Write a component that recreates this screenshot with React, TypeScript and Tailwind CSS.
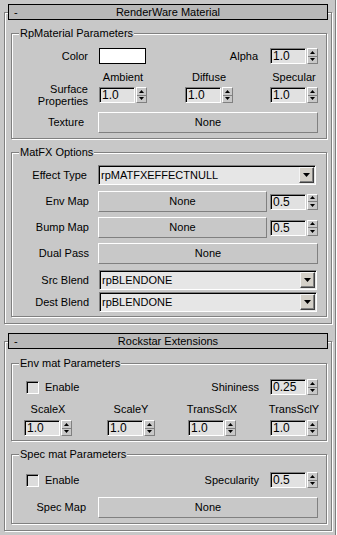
import React from 'react';

const bevelOut = 'border border-t-white border-l-white border-b-[#808080] border-r-[#808080]';
const bevelIn = 'border border-t-[#808080] border-l-[#808080] border-b-white border-r-white shadow-[inset_1px_1px_0_#000]';
const etched = 'border border-[#808080] shadow-[inset_1px_1px_0_#fff,1px_1px_0_#fff]';

const Tri = ({ down = false, big = false }: { down?: boolean; big?: boolean }) => {
  const w = big ? 7 : 5;
  const h = big ? 4 : 3;
  return (
    <svg width={w} height={h} viewBox={`0 0 ${w} ${h}`} className="block">
      {down ? <polygon points={`0,0 ${w},0 ${w / 2},${h}`} fill="#000" /> : <polygon points={`0,${h} ${w},${h} ${w / 2},0`} fill="#000" />}
    </svg>
  );
};

const Spinner = ({ value, className = '' }: { value: string; className?: string }) => (
  <div className={`flex h-[16px] w-[48px] shrink-0 ${className}`}>
    <div className={`w-[36px] h-full bg-[#e1e1e1] ${bevelIn} pl-[2px] text-[12px] leading-[14px]`}>{value}</div>
    <div className={`ml-[1px] w-[11px] h-full flex flex-col ${bevelOut}`}>
      <div className="flex-1 flex items-center justify-center border-b border-b-[#808080]">
        <Tri />
      </div>
      <div className="flex-1 flex items-center justify-center">
        <Tri down />
      </div>
    </div>
  </div>
);

const Btn = ({ className = '', label = 'None' }: { className?: string; label?: string }) => (
  <div className={`h-[21px] flex items-center justify-center shrink-0 ${bevelOut} ${className}`}>{label}</div>
);

const Dropdown = ({ text }: { text: string }) => (
  <div className={`h-[20px] w-[218px] ml-[10px] shrink-0 flex items-center bg-[#e6e6e6] ${bevelIn} pl-[2px] pr-[1px]`}>
    <span className="flex-1 whitespace-nowrap">{text}</span>
    <div className="w-[15px] h-[16px] flex items-center justify-center bg-[#d4d0c8] border border-t-[#f4f4f4] border-l-[#f4f4f4] border-b-[#404040] border-r-[#404040] shadow-[inset_-1px_-1px_0_#808080]">
      <Tri down big />
    </div>
  </div>
);

const Lbl = ({ className = '', children }: { className?: string; children: React.ReactNode }) => (
  <div className={`shrink-0 text-right whitespace-nowrap ${className}`}>{children}</div>
);

const Check = () => <div className={`w-[13px] h-[13px] ml-[14px] shrink-0 bg-[#dcdcdc] ${bevelIn}`} />;

const Group = ({ title, className = '', children }: { title: string; className?: string; children: React.ReactNode }) => (
  <div className={`relative ml-[6px] w-[316px] ${etched} ${className}`}>
    <span className="absolute left-[7px] -top-[8px] bg-[#c8c8c8] px-[1px] leading-[14px] whitespace-nowrap">{title}</span>
    {children}
  </div>
);

const Rollout = ({ title, className = '', children }: { title: string; className?: string; children: React.ReactNode }) => (
  <div className={`ml-[4px] w-[328px] pb-[6px] ${etched} ${className}`}>
    <div className="relative -mt-[9px] ml-[3px] w-[320px] h-[16px] bg-[#b8b8b8] border border-black grid grid-cols-[1fr_auto_1fr] items-center leading-[14px]">
      <span className="pl-[5px]">-</span>
      <span className="whitespace-nowrap">{title}</span>
      <span />
    </div>
    {children}
  </div>
);

export default function App() {
  return (
    <div className="flow-root w-[337px] h-[535px] overflow-hidden bg-[#c8c8c8] font-['Liberation_Sans',Arial,sans-serif] text-[11px] leading-[13px] text-black shadow-[inset_-1px_0_0_#fff,inset_-2px_0_0_#808080]">
      <Rollout title="RenderWare Material" className="mt-[12px]">
        <Group title="RpMaterial Parameters" className="mt-[13px] pb-[5px]">
          <div className="mt-[14px] h-[16px] flex items-center">
            <Lbl className="w-[76px]">Color</Lbl>
            <div className="ml-[11px] w-[47px] h-[16px] bg-white border border-black shrink-0" />
            <Lbl className="w-[112px]">Alpha</Lbl>
            <Spinner value="1.0" className="ml-[12px]" />
          </div>
          <div className="mt-[7px] h-[13px] flex">
            <div className="w-[48px] ml-[87px] flex justify-center whitespace-nowrap">Ambient</div>
            <div className="w-[48px] ml-[38px] flex justify-center whitespace-nowrap">Diffuse</div>
            <div className="w-[48px] ml-[37px] flex justify-center whitespace-nowrap">Specular</div>
          </div>
          <div className="mt-[3px] h-[16px] flex items-center">
            <Lbl className="w-[76px] leading-[12px]">
              Surface
              <br />
              Properties
            </Lbl>
            <Spinner value="1.0" className="ml-[11px]" />
            <Spinner value="1.0" className="ml-[38px]" />
            <Spinner value="1.0" className="ml-[37px]" />
          </div>
          <div className="mt-[9px] flex items-center">
            <Lbl className="w-[76px] pr-[4px]">Texture</Lbl>
            <Btn className="ml-[10px] w-[220px]" />
          </div>
        </Group>

        <Group title="MatFX Options" className="mt-[13px] pb-[4px]">
          <div className="mt-[12px] flex items-center">
            <Lbl className="w-[76px] pr-[1px]">Effect Type</Lbl>
            <Dropdown text="rpMATFXEFFECTNULL" />
          </div>
          <div className="mt-[6px] flex items-center">
            <Lbl className="w-[77px]">Env Map</Lbl>
            <Btn className="ml-[9px] w-[169px]" />
            <Spinner value="0.5" className="ml-[3px]" />
          </div>
          <div className="mt-[5px] flex items-center">
            <Lbl className="w-[77px]">Bump Map</Lbl>
            <Btn className="ml-[9px] w-[169px]" />
            <Spinner value="0.5" className="ml-[3px]" />
          </div>
          <div className="mt-[5px] flex items-center">
            <Lbl className="w-[77px]">Dual Pass</Lbl>
            <Btn className="ml-[9px] w-[220px]" />
          </div>
          <div className="mt-[6px] flex items-center">
            <Lbl className="w-[77px]">Src Blend</Lbl>
            <Dropdown text="rpBLENDONE" />
          </div>
          <div className="mt-[2px] flex items-center">
            <Lbl className="w-[77px]">Dest Blend</Lbl>
            <Dropdown text="rpBLENDONE" />
          </div>
        </Group>
      </Rollout>

      <Rollout title="Rockstar Extensions" className="mt-[17px]">
        <Group title="Env mat Parameters" className="mt-[14px] pb-[4px]">
          <div className="mt-[15px] h-[16px] flex items-center">
            <Check />
            <span className="ml-[6px]">Enable</span>
            <div className="flex-1 text-right pr-[11px]">Shininess</div>
            <Spinner value="0.25" className="mr-[8px]" />
          </div>
          <div className="mt-[8px] h-[13px] flex">
            <div className="w-[48px] ml-[12px] flex justify-center whitespace-nowrap">ScaleX</div>
            <div className="w-[48px] ml-[35px] flex justify-center whitespace-nowrap">ScaleY</div>
            <div className="w-[48px] ml-[33px] flex justify-center whitespace-nowrap">TransSclX</div>
            <div className="w-[48px] ml-[34px] flex justify-center whitespace-nowrap">TransSclY</div>
          </div>
          <div className="mt-[4px] h-[16px] flex items-center">
            <Spinner value="1.0" className="ml-[12px]" />
            <Spinner value="1.0" className="ml-[35px]" />
            <Spinner value="1.0" className="ml-[33px]" />
            <Spinner value="1.0" className="ml-[34px]" />
          </div>
        </Group>

        <Group title="Spec mat Parameters" className="mt-[13px] pb-[5px]">
          <div className="mt-[17px] h-[16px] flex items-center">
            <Check />
            <span className="ml-[6px]">Enable</span>
            <div className="flex-1 text-right pr-[11px]">Specularity</div>
            <Spinner value="0.5" className="mr-[8px]" />
          </div>
          <div className="mt-[9px] flex items-center">
            <Lbl className="w-[76px] pr-[2px]">Spec Map</Lbl>
            <Btn className="ml-[10px] w-[220px]" />
          </div>
        </Group>
      </Rollout>
    </div>
  );
}
